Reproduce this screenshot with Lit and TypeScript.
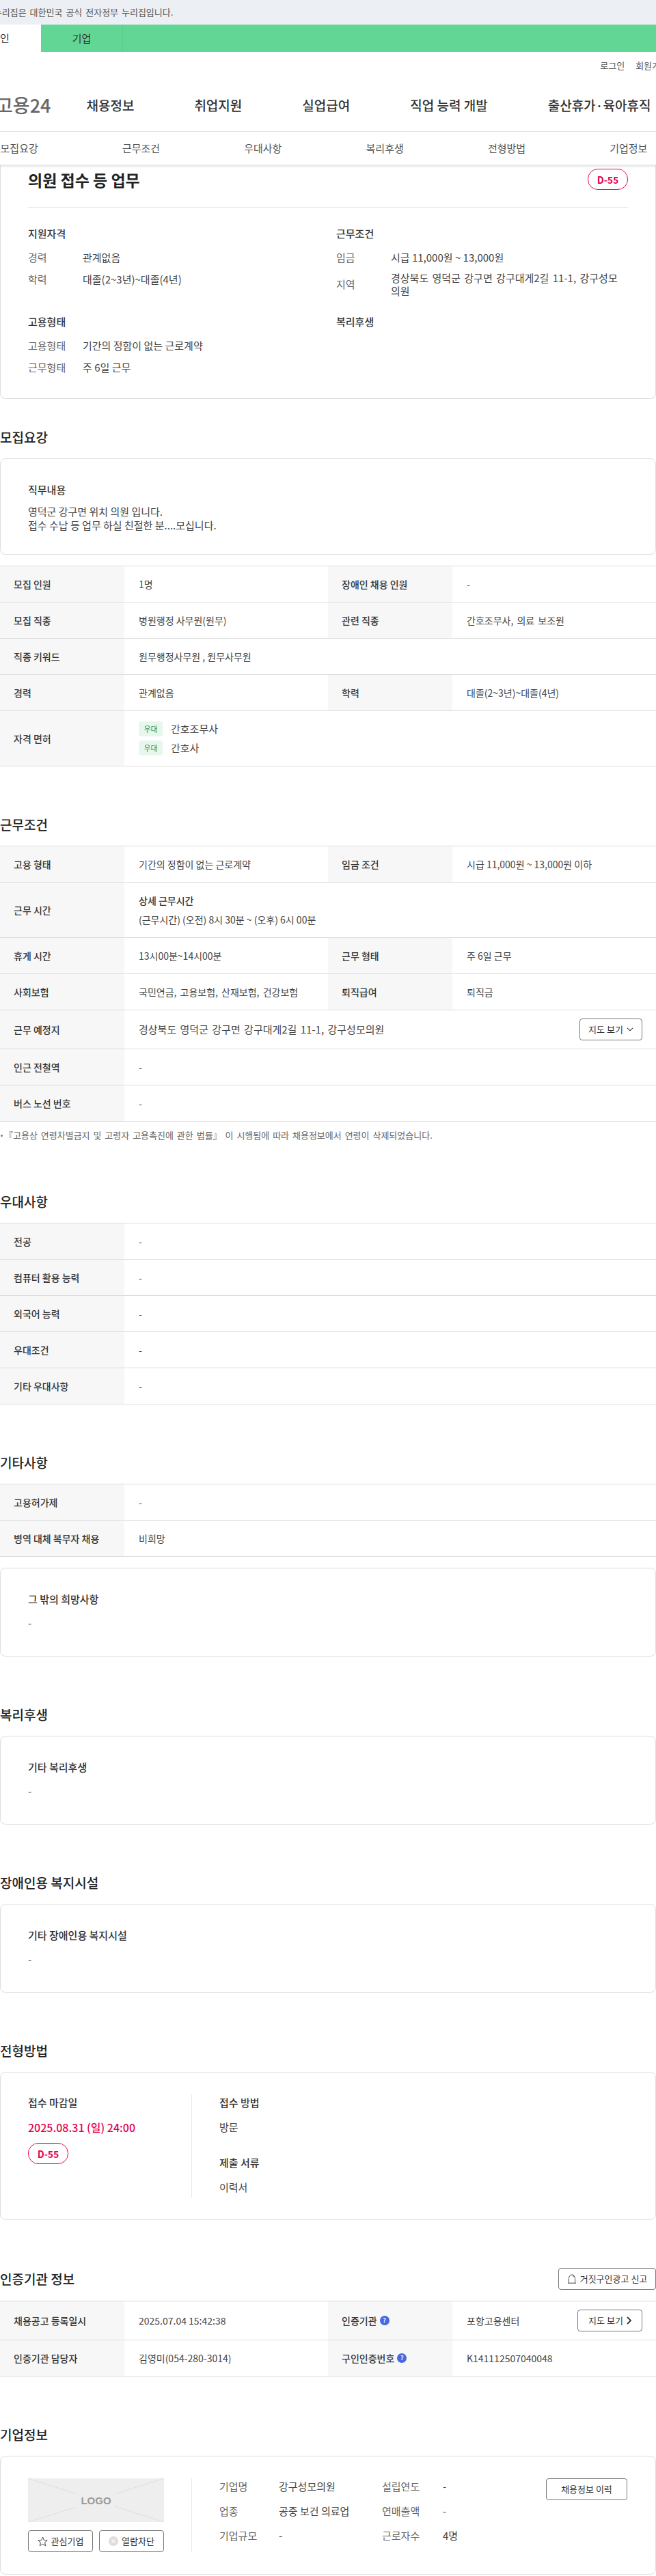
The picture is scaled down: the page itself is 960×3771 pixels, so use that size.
import { LitElement, html, css } from "lit";
import { customElement } from "lit/decorators.js";

const chevronDown = html`<svg class="ico" width="10" height="6" viewBox="0 0 10 6"><polyline points="1,0.8 5,4.8 9,0.8" fill="none" stroke="#333" stroke-width="1.1"/></svg>`;
const chevronRight = html`<svg class="ico" width="7" height="12" viewBox="0 0 7 12"><polyline points="1,1 6,6 1,11" fill="none" stroke="#333" stroke-width="1.8"/></svg>`;
const bell = html`<svg class="ico" width="14" height="14" viewBox="0 0 14 14"><path d="M2.5 13V6.5a4.5 5.5 0 0 1 9 0V13M1 13.2h12M8.5 1.5l1 2.5" fill="none" stroke="#444" stroke-width="1"/></svg>`;
const star = html`<svg class="ico" width="15" height="15" viewBox="0 0 15 15"><polygon points="7.5,1 9.4,5.5 14.2,5.9 10.6,9 11.7,13.8 7.5,11.3 3.3,13.8 4.4,9 0.8,5.9 5.6,5.5" fill="none" stroke="#444" stroke-width="1"/></svg>`;
const xCircle = html`<svg class="ico" width="14" height="14" viewBox="0 0 14 14"><circle cx="7" cy="7" r="7" fill="#ddd"/><path d="M4.3 4.3l5.4 5.4M9.7 4.3l-5.4 5.4" stroke="#fff" stroke-width="1.2"/></svg>`;

const row = (th: unknown, td: unknown) => html`<div class="row"><div class="th">${th}</div><div class="td">${td}</div></div>`;
const row2 = (a: unknown, b: unknown, c: unknown, d: unknown) =>
  html`<div class="row two"><div class="th">${a}</div><div class="td">${b}</div><div class="th">${c}</div><div class="td">${d}</div></div>`;
const wide = (s: string) => html`<span class="wide">${s}</span>`;

@customElement("app-root")
export class AppRoot extends LitElement {
  static styles = css`
    :host {
      display: block;
      overflow: hidden;
      width: 960px;
      background: #fff;
      color: #444;
      font: 400 15px/24px "Noto Sans CJK KR", "Noto Sans", sans-serif;
    }
    * { box-sizing: border-box; }
    .ico { flex: none; }
    .wide { word-spacing: 2px; }

    .gov { height: 36px; background: #eceff4; color: #555; font-size: 13px; line-height: 36px; margin-left: -26px; word-spacing: 2px; white-space: nowrap; }
    .who { display: flex; height: 40px; background: #62d694; margin-left: -60px; color: #333; line-height: 40px; }
    .who span { width: 120px; text-align: center; border-right: 1px solid #5bcb8b; }
    .who .on { background: #fff; border: 0; }
    .util { display: flex; justify-content: flex-end; gap: 16px; height: 40px; margin-right: -18px; font-size: 13px; line-height: 40px; color: #555; }
    .gnb { display: flex; align-items: center; height: 77px; border-bottom: 1px solid #e8e8e8; font-size: 19px; font-weight: 500; color: #333; gap: 88px; white-space: nowrap; }
    .brand { font-size: 27px; color: #666; margin-left: -6px; margin-right: -36px; }
    .tabs { position: relative; z-index: 1; display: grid; grid-template-columns: repeat(6, 178.33px); height: 48px; margin-left: -61px; width: 1070px; line-height: 48px; text-align: center; color: #555; background: #fff; }
    .shadow { position: relative; z-index: 1; height: 48px; box-shadow: 0 2px 4px rgba(0, 0, 0, 0.14); background: #fff; }

    .card { border: 1px solid #ddd; border-radius: 8px; padding: 33px 40px; }
    .card.small { height: 130px; }
    .card.top { border-top: 0; border-radius: 0 0 8px 8px; padding: 6px 40px 33px; }
    .head { display: flex; justify-content: space-between; align-items: center; padding-bottom: 25px; border-bottom: 1px solid #e8e8e8; margin-bottom: 26px; }
    .head h1 { margin: 0; font-size: 23px; line-height: 30px; font-weight: 700; color: #222; }
    .dday { display: inline-flex; align-items: center; justify-content: center; width: 59px; height: 31px; border: 1px solid #e6004e; border-radius: 15px; color: #e6004e; font-size: 14px; font-weight: 700; }
    .summary { display: grid; grid-template-columns: 451px 1fr; row-gap: 24px; }
    h4 { margin: 0 0 11px; font-size: 15px; font-weight: 500; line-height: 24px; color: #333; }
    .kv { display: grid; grid-template-columns: 80px 1fr; align-items: center; margin-bottom: 8px; }
    .kv:last-child { margin-bottom: 0; }
    .kv b { font-weight: 400; color: #666; }
    .kv .addr { line-height: 19px; padding-right: 8px; word-spacing: 2px; }

    h2 { margin: 0 0 16px; padding-top: 70px; font-size: 19px; line-height: 30px; font-weight: 500; color: #222; }
    h2.first { padding-top: 41px; }
    .text { line-height: 19.5px; margin-top: 10px; }
    .dash { line-height: 24px; }
    .gap { margin-top: 16px; }

    .table { border-top: 1px solid #ddd; font-size: 14px; }
    .row { display: grid; grid-template-columns: 182px 1fr; border-bottom: 1px solid #ddd; }
    .row.two { grid-template-columns: 182px 298px 182px 298px; }
    .th { display: flex; align-items: center; gap: 4px; padding: 14px 0 14px 20px; background: #f7f7f7; font-weight: 500; color: #333; }
    .td { display: flex; flex-direction: column; justify-content: center; gap: 4px; padding: 14px 20px 14px 21px; min-width: 0; }
    .td strong { font-weight: 500; color: #333; }
    .place { font-size: 15px; word-spacing: 2px; }
    .line { display: flex; align-items: center; gap: 12px; font-size: 15px; }
    .tag { display: flex; align-items: center; justify-content: center; width: 35px; height: 22px; border-radius: 4px; background: #e8f7ee; color: #2b9a58; font-size: 11px; }
    .tight .th, .tight .td { padding-top: 12px; padding-bottom: 12px; }
    .split { flex-direction: row; justify-content: space-between; align-items: center; }
    .btn { display: inline-flex; flex: none; align-items: center; justify-content: center; gap: 5px; height: 32px; border: 1px solid #777; border-radius: 4px; background: #fff; font-size: 13px; color: #333; white-space: nowrap; word-spacing: 0; }
    .map { width: 92px; }
    .map2 { width: 95px; }
    .q { display: inline-flex; align-items: center; justify-content: center; width: 14px; height: 14px; border-radius: 50%; background: #4a67e0; color: #fff; font-size: 9px; font-weight: 700; line-height: 14px; }
    .note { display: flex; align-items: center; margin-top: 10px; height: 20px; font-size: 13px; line-height: 20px; color: #666; word-spacing: 2px; white-space: nowrap; }
    .note i { width: 3px; height: 3px; border-radius: 50%; background: #777; margin: 0 2px 0 1px; }
    .note + h2 { padding-top: 72px; }

    .apply { display: flex; height: 217px; padding: 32px 0 32px 40px; }
    .apply .l { width: 240px; border-right: 1px solid #e8e8e8; }
    .apply .r { padding-left: 40px; }
    .apply h4 { margin-bottom: 12px; }
    .date { color: #e6004e; font-size: 16px; font-weight: 500; margin-bottom: 11px; }
    .apply .r p { margin: 0 0 28px; }
    .apply .r p:last-child { margin: 0; }

    .titled { display: flex; justify-content: space-between; align-items: center; margin: 70px 0 16px; }
    .titled h2 { margin: 0; padding: 0; }
    .report { width: 143px; }

    .company { display: flex; padding: 32px 41px 32px 40px; }
    .co-l { width: 240px; border-right: 1px solid #e8e8e8; padding-right: 40px; flex: none; }
    .logo { display: grid; place-items: center; width: 199px; height: 64px; background: #eee; margin-bottom: 12px; }
    .logo > * { grid-area: 1 / 1; }
    .logo span { font: 700 15px "Liberation Sans", sans-serif; color: #9a9a9a; }
    .co-btns { display: flex; justify-content: space-between; }
    .co-btns .btn { width: 95px; }
    .co-r { flex: 1; display: flex; justify-content: space-between; padding-left: 40px; }
    .facts { display: grid; grid-template-columns: 87px 151px 89px 60px; grid-auto-rows: 24px; row-gap: 12px; }
    .facts b { font-weight: 400; color: #666; }
    .history { width: 119px; }
  `;

  render() {
    return html`
      <div class="gov">이 누리집은 대한민국 공식 전자정부 누리집입니다.</div>
      <div class="who"><span class="on">개인</span><span>기업</span></div>
      <div class="util"><span>로그인</span><span>회원가입</span></div>
      <nav class="gnb">
        <span class="brand">고용24</span>
        <span>채용정보</span><span>취업지원</span><span>실업급여</span><span>직업 능력 개발</span><span>출산휴가·육아휴직</span>
      </nav>
      <div class="shadow">
        <div class="tabs">
          <span>모집요강</span><span>근무조건</span><span>우대사항</span><span>복리후생</span><span>전형방법</span><span>기업정보</span>
        </div>
      </div>

      <section class="card top">
        <div class="head"><h1>의원 접수 등 업무</h1><span class="dday">D-55</span></div>
        <div class="summary">
          <div>
            <h4>지원자격</h4>
            <div class="kv"><b>경력</b><span>관계없음</span></div>
            <div class="kv"><b>학력</b><span>대졸(2~3년)~대졸(4년)</span></div>
          </div>
          <div>
            <h4>근무조건</h4>
            <div class="kv"><b>임금</b><span>시급 11,000원 ~ 13,000원</span></div>
            <div class="kv"><b>지역</b><span class="addr">경상북도 영덕군 강구면 강구대게2길 11-1, 강구성모의원</span></div>
          </div>
          <div>
            <h4>고용형태</h4>
            <div class="kv"><b>고용형태</b><span>기간의 정함이 없는 근로계약</span></div>
            <div class="kv"><b>근무형태</b><span>주 6일 근무</span></div>
          </div>
          <div><h4>복리후생</h4></div>
        </div>
      </section>

      <h2 class="first">모집요강</h2>
      <section class="card">
        <h4 style="margin:0">직무내용</h4>
        <div class="text">영덕군 강구면 위치 의원 입니다.<br />접수 수납 등 업무 하실 친절한 분....모십니다.</div>
      </section>
      <div class="table gap">
        ${row2("모집 인원", "1명", "장애인 채용 인원", "-")}
        ${row2("모집 직종", "병원행정 사무원(원무)", "관련 직종", wide("간호조무사, 의료 보조원"))}
        ${row("직종 키워드", "원무행정사무원 , 원무사무원")}
        ${row2("경력", "관계없음", "학력", "대졸(2~3년)~대졸(4년)")}
        ${row(
          "자격 면허",
          html`<div class="line"><span class="tag">우대</span>간호조무사</div>
            <div class="line"><span class="tag">우대</span>간호사</div>`
        )}
      </div>

      <h2>근무조건</h2>
      <div class="table">
        ${row2("고용 형태", "기간의 정함이 없는 근로계약", "임금 조건", "시급 11,000원 ~ 13,000원 이하")}
        ${row("근무 시간", html`<strong>상세 근무시간</strong><span>(근무시간) (오전) 8시 30분 ~ (오후) 6시 00분</span>`)}
        ${row2("휴게 시간", "13시00분~14시00분", "근무 형태", "주 6일 근무")}
        ${row2("사회보험", wide("국민연금, 고용보험, 산재보험, 건강보험"), "퇴직급여", "퇴직금")}
        <div class="row tight">
          <div class="th">근무 예정지</div>
          <div class="td split"><span class="place">경상북도 영덕군 강구면 강구대게2길 11-1, 강구성모의원</span><span class="btn map">지도 보기 ${chevronDown}</span></div>
        </div>
        ${row("인근 전철역", "-")}
        ${row("버스 노선 번호", "-")}
      </div>
      <div class="note"><i></i>『고용상 연령차별금지 및 고령자 고용촉진에 관한 법률』 이 시행됨에 따라 채용정보에서 연령이 삭제되었습니다.</div>

      <h2>우대사항</h2>
      <div class="table">
        ${row("전공", "-")}
        ${row("컴퓨터 활용 능력", "-")}
        ${row("외국어 능력", "-")}
        ${row("우대조건", "-")}
        ${row("기타 우대사항", "-")}
      </div>

      <h2>기타사항</h2>
      <div class="table">
        ${row("고용허가제", "-")}
        ${row("병역 대체 복무자 채용", "비희망")}
      </div>
      <section class="card small gap"><h4>그 밖의 희망사항</h4><div class="dash">-</div></section>

      <h2>복리후생</h2>
      <section class="card small"><h4>기타 복리후생</h4><div class="dash">-</div></section>

      <h2>장애인용 복지시설</h2>
      <section class="card small"><h4>기타 장애인용 복지시설</h4><div class="dash">-</div></section>

      <h2>전형방법</h2>
      <section class="card apply">
        <div class="l">
          <h4>접수 마감일</h4>
          <div class="date">2025.08.31 (일) 24:00</div>
          <span class="dday">D-55</span>
        </div>
        <div class="r">
          <h4>접수 방법</h4>
          <p>방문</p>
          <h4>제출 서류</h4>
          <p>이력서</p>
        </div>
      </section>

      <div class="titled">
        <h2>인증기관 정보</h2>
        <span class="btn report">${bell} 거짓구인광고 신고</span>
      </div>
      <div class="table">
        <div class="row two tight">
          <div class="th">채용공고 등록일시</div>
          <div class="td">2025.07.04 15:42:38</div>
          <div class="th">인증기관 <span class="q">?</span></div>
          <div class="td split">포항고용센터<span class="btn map2">지도 보기 ${chevronRight}</span></div>
        </div>
        ${row2("인증기관 담당자", "김영미(054-280-3014)", html`구인인증번호 <span class="q">?</span>`, "K141112507040048")}
      </div>

      <h2>기업정보</h2>
      <section class="card company">
        <div class="co-l">
          <div class="logo">
            <svg width="199" height="64" viewBox="0 0 199 64">
              <path d="M0 0L71 23M0 64L71 42M199 0L127 23M199 64L127 41" stroke="#ddd" stroke-width="1" fill="none" />
            </svg>
            <span>LOGO</span>
          </div>
          <div class="co-btns">
            <span class="btn">${star} 관심기업</span>
            <span class="btn">${xCircle} 열람차단</span>
          </div>
        </div>
        <div class="co-r">
          <div class="facts">
            <b>기업명</b><span>강구성모의원</span><b>설립연도</b><span>-</span>
            <b>업종</b><span>공중 보건 의료업</span><b>연매출액</b><span>-</span>
            <b>기업규모</b><span>-</span><b>근로자수</b><span>4명</span>
          </div>
          <span class="btn history">채용정보 이력</span>
        </div>
      </section>
    `;
  }
}
